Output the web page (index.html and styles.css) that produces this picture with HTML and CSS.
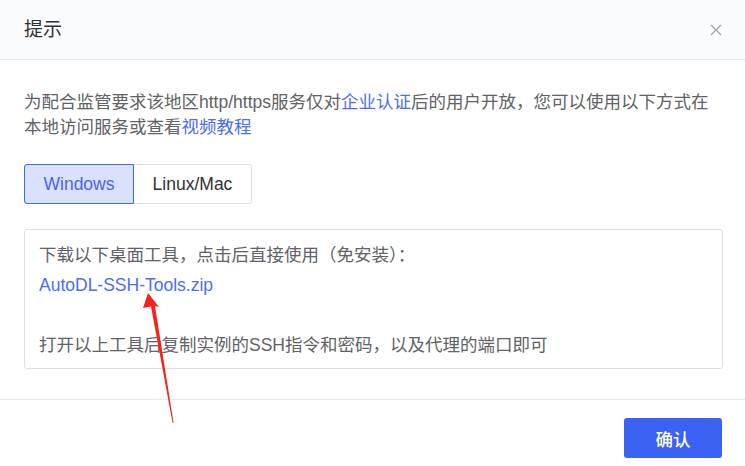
FILE: index.html
```html
<!DOCTYPE html>
<html lang="zh">
<head>
<meta charset="utf-8">
<link rel="stylesheet" href="styles.css">
</head>
<body>
<div class="dialog">
  <div class="header">
    <span class="title">提示</span>
    <svg class="close" width="12" height="12" viewBox="0 0 12 12"><path d="M1 1L11 11M11 1L1 11" stroke="#a0a3a9" stroke-width="1.2" fill="none"/></svg>
  </div>
  <div class="body">
    <p class="intro">为配合监管要求该地区http/https服务仅对<a class="link">企业认证</a>后的用户开放，您可以使用以下方式在本地访问服务或查看<a class="link">视频教程</a></p>
    <div class="tabs">
      <div class="tab active">Windows</div>
      <div class="tab">Linux/Mac</div>
    </div>
    <div class="panel">
      <div>下载以下桌面工具，点击后直接使用（免安装）：</div>
      <div><a class="link">AutoDL-SSH-Tools.zip</a></div>
      <div class="blank">&nbsp;</div>
      <div>打开以上工具后复制实例的SSH指令和密码，以及代理的端口即可</div>
    </div>
  </div>
  <div class="footer">
    <button class="btn">确认</button>
  </div>
  <svg class="arrow" width="50" height="140" viewBox="0 0 50 140">
    <path d="M17 2 L28 16 L24 15 L42.6 132 L41.6 132 L20 15.5 L12 17 Z" fill="#f5231d"/>
  </svg>
</div>
</body>
</html>
```

FILE: styles.css
```css
html, body {
  margin: 0;
  padding: 0;
  background: #ffffff;
}
body {
  font-family: "Liberation Sans", "Noto Sans CJK SC", sans-serif;
  width: 745px;
  height: 466px;
  overflow: hidden;
}
.dialog {
  position: relative;
  width: 745px;
  height: 466px;
  background: #fff;
}
.header {
  height: 60px;
  box-sizing: border-box;
  background: #f9fafc;
  border-bottom: 1px solid #e4e7ed;
  display: flex;
  align-items: center;
  justify-content: space-between;
  padding: 0 23px 0 24px;
}
.title {
  font-size: 19px;
  color: #303133;
  line-height: 24px;
}
.close {
  display: block;
}
.body {
  padding: 30px 22px 0 24px;
  height: 340px;
  box-sizing: border-box;
  border-bottom: 1px solid #e4e7ed;
}
.intro {
  margin: 0;
  font-size: 17.5px;
  line-height: 25px;
  color: #606266;
}
.link {
  color: #4a6ef5;
  text-decoration: none;
}
.tabs {
  display: flex;
  margin-top: 24px;
}
.tab {
  height: 40px;
  box-sizing: border-box;
  display: flex;
  align-items: center;
  justify-content: center;
  font-size: 17.5px;
  color: #303133;
  border: 1px solid #dcdfe6;
  width: 118px;
  border-left: none;
  border-radius: 0 3px 3px 0;
}
.tab.active {
  width: 110px;
  background: #d9e1fc;
  border: 1px solid #3e69f2;
  color: #4c63ee;
  border-radius: 3px 0 0 3px;
}
.panel {
  margin-top: 25px;
  width: 699px;
  box-sizing: border-box;
  border: 1px solid #dcdfe6;
  border-radius: 3px;
  padding: 10px 14px 8px 14px;
  font-size: 17.5px;
  line-height: 30px;
  color: #606266;
}
.footer {
  display: flex;
  justify-content: flex-end;
  padding: 18px 23px 0 0;
}
.btn {
  width: 98px;
  height: 40px;
  border: none;
  border-radius: 3px;
  background: #3b63f3;
  color: #fff;
  font-family: "Liberation Sans", "Noto Sans CJK SC", sans-serif;
  font-size: 17.5px;
  font-weight: 500;
}
.arrow {
  position: absolute;
  left: 131px;
  top: 291px;
}
```
